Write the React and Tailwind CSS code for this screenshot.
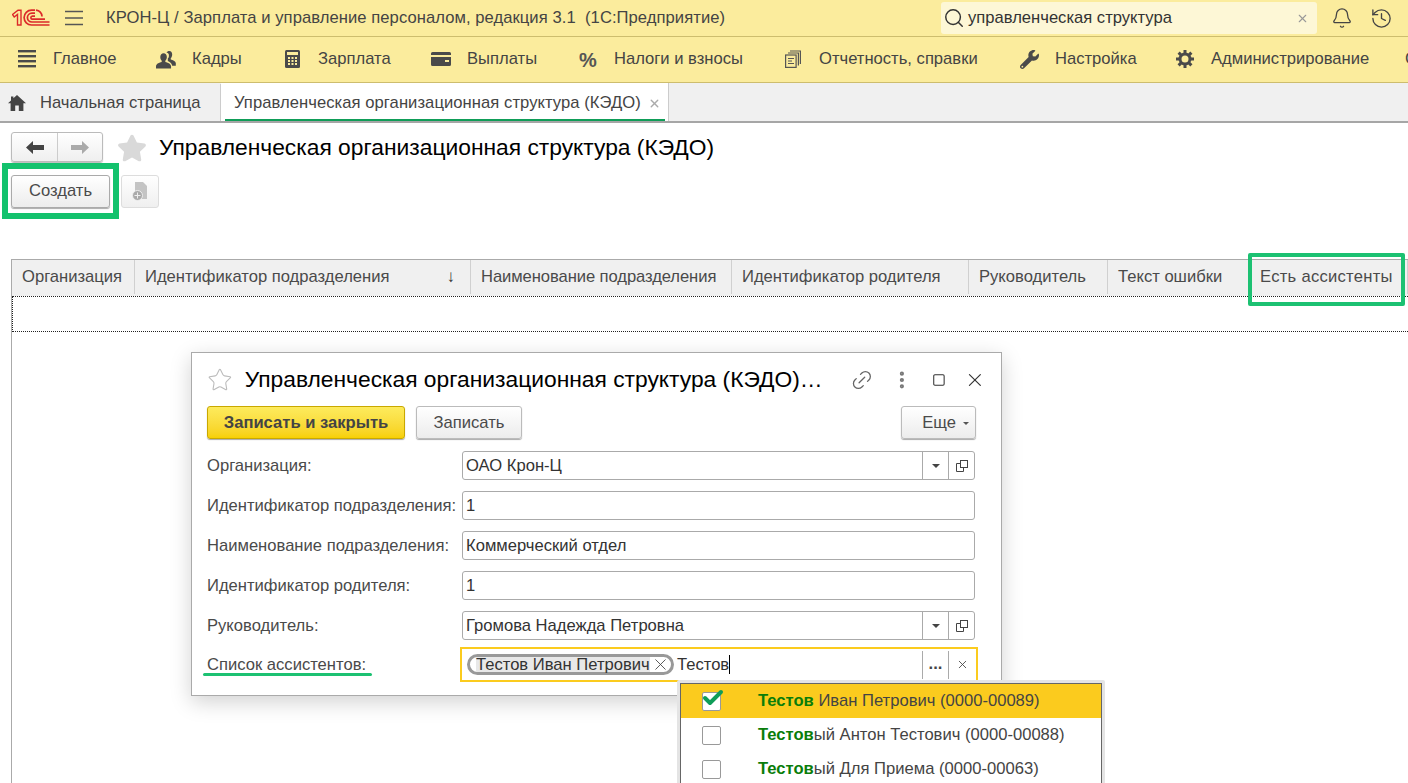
import { Search, X, Bell, History, Link2, Square, EllipsisVertical, Check, Star } from "lucide-react";
import { FaStar, FaWrench } from "react-icons/fa";

const Logo = () => (
  <svg width="38" height="18" viewBox="0 0 38 18" fill="none" stroke="#dc2a2a" strokeWidth="1.4">
    <path d="M0.5 5.5 L6 1.2 H9 V16 H5.5 V5.5 L2.2 8Z" />
    <path d="M23 1.2 H19.5 A7.4 7.4 0 0 0 19.5 16 H37.5" strokeWidth="1.7" />
    <path d="M23 4.2 H19.8 A4.4 4.4 0 0 0 19.8 13 H37.5" strokeWidth="1.7" />
    <path d="M23 7.2 H20 A1.5 1.5 0 0 0 20 10.1 H33" strokeWidth="1.7" />
    <path d="M24 1.2 A7 7 0 0 1 30 7.5" strokeWidth="1.7" />
  </svg>
);

const HamburgerIcon = ({ className }) => (
  <svg width="18" height="16" viewBox="0 0 18 16" className={className} stroke="currentColor" strokeWidth="1.5">
    <path d="M0 1.5H18M0 8H18M0 14.5H18" />
  </svg>
);

const ListIcon = () => (
  <svg width="18" height="18" viewBox="0 0 18 18" fill="#4a4a4a">
    <rect y="0" width="18" height="2.4" />
    <rect y="5" width="18" height="2.4" />
    <rect y="10" width="18" height="2.4" />
    <rect y="15" width="18" height="2.4" />
  </svg>
);

const PeopleIcon = () => (
  <svg width="21" height="19" viewBox="0 0 21 19" fill="#4a4a4a">
    <path d="M14 0.5C16 0.5 17 2 17 4.3C17 6.3 16.2 7.6 15.5 8.2V9.4C17.6 10 20.5 10.8 20.8 13.2V16H17C16.6 13.4 14.4 11.8 12.4 11V8.4C13.6 7.6 13.8 5.6 13.4 4C12.8 2.8 12 2.2 11 2.1C11.6 1.1 12.7 0.5 14 0.5Z" />
    <path d="M8 3C10 3 11.4 4.6 11.4 7C11.4 8.8 10.6 10 9.8 10.8V12C12.2 12.8 15.4 13.6 15.8 16.2V19H0V16.2C0.4 13.6 3.6 12.8 6 12V10.8C5.2 10 4.5 8.8 4.5 7C4.5 4.6 6 3 8 3Z" />
  </svg>
);

const CalcIcon = () => (
  <svg width="15" height="18" viewBox="0 0 15 18">
    <rect width="15" height="18" rx="1.5" fill="#4a4a4a" />
    <rect x="2" y="2" width="11" height="3" fill="#fbec9d" />
    <path d="M3 7H5V9H3ZM6.5 7H8.5V9H6.5ZM10 7H12V9H10ZM3 10H5V12H3ZM6.5 10H8.5V12H6.5ZM10 10H12V12H10ZM3 13H5V15H3ZM6.5 13H8.5V15H6.5ZM10 13H12V15H10Z" fill="#fbec9d" />
  </svg>
);

const CardIcon = () => (
  <svg width="20" height="14" viewBox="0 0 20 14" fill="#4a4a4a">
    <path d="M1.5 0H18.5A1.5 1.5 0 0 1 20 1.5V3H0V1.5A1.5 1.5 0 0 1 1.5 0Z" />
    <path d="M0 5H20V12.5A1.5 1.5 0 0 1 18.5 14H1.5A1.5 1.5 0 0 1 0 12.5ZM14 8V10H18V8Z" fillRule="evenodd" />
  </svg>
);

const ReportsIcon = () => (
  <svg width="16" height="18" viewBox="0 0 16 18" fill="none" stroke="#555" strokeWidth="1.2">
    <path d="M5 1H15.4V14" />
    <path d="M3 3H13.4V15.5" />
    <rect x="0.6" y="5" width="10.5" height="12.4" fill="#fbec9d" />
    <path d="M3 8.5H9M3 11H7M3 13.5H9" />
  </svg>
);

const GearIcon = () => (
  <svg width="18" height="18" viewBox="0 0 18 18" fill="none" stroke="#4a4a4a">
    <circle cx="9" cy="9" r="5" strokeWidth="3" />
    <path d="M9 0V4M9 14V18M0 9H4M14 9H18M2.6 2.6 5.4 5.4M12.6 12.6 15.4 15.4M15.4 2.6 12.6 5.4M5.4 12.6 2.6 15.4" strokeWidth="3" />
  </svg>
);

const HomeIcon = () => (
  <svg width="18" height="16" viewBox="0 0 18 16" fill="#444">
    <path d="M9 0 18 8.2H15.4V16H10.8V10.6H7.2V16H2.6V8.2H0L3 5.4V1.4H5.4V3.2Z" />
  </svg>
);

const navItems = [
  { label: "Главное", icon: <ListIcon />, width: "w-[139px]" },
  { label: "Кадры", icon: <PeopleIcon />, width: "w-[126px]" },
  { label: "Зарплата", icon: <CalcIcon />, width: "w-[149px]" },
  { label: "Выплаты", icon: <CardIcon />, width: "w-[147px]" },
  { label: "Налоги и взносы", icon: <span className="text-[20px] font-bold text-[#555]">%</span>, width: "w-[205px]" },
  { label: "Отчетность, справки", icon: <ReportsIcon />, width: "w-[236px]" },
  { label: "Настройка", icon: <FaWrench size={19} color="#4a4a4a" />, width: "w-[156px]" },
  { label: "Администрирование", icon: <GearIcon />, width: "w-[194px]" },
];

const columns = [
  { label: "Организация", width: "w-[123px]" },
  { label: "Идентификатор подразделения", width: "w-[336px]", sorted: true },
  { label: "Наименование подразделения", width: "w-[261px] tracking-[-0.08px]" },
  { label: "Идентификатор родителя", width: "w-[237px]" },
  { label: "Руководитель", width: "w-[139px]" },
  { label: "Текст ошибки", width: "w-[142px]" },
  { label: "Есть ассистенты", width: "w-[158px] tracking-[0.27px]" },
];

const Field = ({ label, value, buttons }) => (
  <div className="flex h-[29px] items-center mb-[11px]">
    <div className="w-[255px] shrink-0 whitespace-nowrap pt-[2px] text-[#4a4a4a]">{label}</div>
    <div className="flex h-full w-[513px] items-center rounded-[3px] border border-[#aaa] pl-[3px] text-[#333]">
      <div className="flex-1 pt-[2px]">{value}</div>
      {buttons && (
        <>
          <div className="flex h-full w-[26px] items-center justify-center border-l border-[#aaa]">
            <div className="border-x-[4px] border-t-[4px] border-x-transparent border-t-[#444]" />
          </div>
          <div className="flex h-full w-[26px] items-center justify-center border-l border-[#aaa]">
            <svg width="12" height="12" viewBox="0 0 12 12" fill="none" stroke="#444">
              <rect x="4.5" y="0.5" width="7" height="7" />
              <path d="M4.5 3.5H0.5V11.5H7.5V7.5" />
            </svg>
          </div>
        </>
      )}
    </div>
  </div>
);

const PickRow = ({ bold, rest, checked }) => (
  <div className={`flex h-[34px] items-center pl-[21px] ${checked ? "bg-[#fbcb1e]" : "bg-white"}`}>
    <div className="relative mr-[37px] h-[19px] w-[19px] rounded-[2px] border border-[#999] bg-white">
      {checked && <Check size={24} strokeWidth={4} className="absolute -top-[7px] -left-[2px] text-[#0f9d58]" />}
    </div>
    <div className="whitespace-nowrap text-[#444]">
      <span className="font-bold text-[#0a7d0a]">{bold}</span>
      {rest}
    </div>
  </div>
);

export default function App() {
  return (
    <div className="relative h-[783px] w-[1408px] overflow-hidden bg-white text-[16.6px] font-['Liberation_Sans',Arial,sans-serif]">
      {/* title bar */}
      <div className="flex h-[37px] items-center border-b border-[#cdbd6e] bg-[#fbec9d] text-[#444]">
        <div className="ml-[12px] w-[53px]">
          <Logo />
        </div>
        <HamburgerIcon className="text-[#555]" />
        <div className="ml-[23px] w-[835px] whitespace-nowrap tracking-[0.06px]">КРОН-Ц / Зарплата и управление персоналом, редакция 3.1&nbsp; (1С:Предприятие)</div>
        <div className="flex h-[32px] w-[376px] items-center rounded-[3px] bg-[#fdf7d6] pl-[2px] pr-[8px]">
          <Search size={22} strokeWidth={1.6} className="mr-[3px] text-[#333]" />
          <span className="flex-1 text-[#333]">управленческая структура</span>
          <X size={13} className="text-[#999]" />
        </div>
        <Bell size={22} strokeWidth={1.4} className="ml-[14px] text-[#444]" />
        <History size={23} strokeWidth={1.4} className="ml-[17px] text-[#444]" />
      </div>

      {/* sections */}
      <div className="flex h-[46px] items-center overflow-hidden border-b border-[#cdbd6e] bg-[#fbec9d] pl-[17px] text-[#444]">
        {navItems.map((item) => (
          <div key={item.label} className={`flex shrink-0 items-center whitespace-nowrap ${item.width}`}>
            <div className="mr-[16px] flex w-[20px] shrink-0 justify-center">{item.icon}</div>
            <span>{item.label}</span>
          </div>
        ))}
        <span className="ml-[36px] shrink-0">С</span>
      </div>

      {/* tabs */}
      <div className="flex h-[40px] border-b-2 border-[#a6a6a6] bg-[#f0f0f0] pt-[1px]">
        <div className="flex w-[221px] items-center border-r border-[#ccc] pl-[8px] pt-[1px] text-[#444]">
          <div className="mr-[14px]"><HomeIcon /></div>
          Начальная страница
        </div>
        <div className="relative -mt-[1px] flex w-[448px] items-center whitespace-nowrap border-r border-[#ccc] bg-white pt-[2px] pl-[13px] tracking-[0.06px] text-[#444]">
          Управленческая организационная структура (КЭДО)
          <X size={13} strokeWidth={2.5} className="ml-[7px] text-[#aaa]" />
          <div className="absolute bottom-0 left-[4px] right-[3px] h-[2px] bg-[#0f9d58]" />
        </div>
      </div>

      {/* form header */}
      <div className="flex h-[52px] items-start pl-[11px] pt-[9px]">
        <div className="flex h-[30px] w-[92px] rounded-[3px] border border-[#bbb] bg-gradient-to-b from-white to-[#efefef] shadow-[0_1px_1px_#bbb]">
          <div className="flex w-[46px] items-center justify-center border-r border-[#ccc]">
            <svg width="18" height="13" viewBox="0 0 18 13" fill="#444"><path d="M0 6.5 7 0V4H18V9H7V13Z" /></svg>
          </div>
          <div className="flex flex-1 items-center justify-center">
            <svg width="18" height="13" viewBox="0 0 18 13" fill="#aaa"><path d="M18 6.5 11 0V4H0V9H11V13Z" /></svg>
          </div>
        </div>
        <FaStar size={30} color="#d9d9d9" className="ml-[14px] mt-[1px]" />
        <h1 className="ml-[12px] text-[22.8px] leading-[30px] text-black">Управленческая организационная структура (КЭДО)</h1>
      </div>

      {/* command bar */}
      <div className="flex h-[84px] items-start pl-[11px]">
        <button className="h-[33px] w-[99px] rounded-[3px] border border-[#aaa] bg-gradient-to-b from-white to-[#ececec] text-[#4a4a4a] shadow-[0_1px_1px_#aaa]">
          Создать
        </button>
        <div className="ml-[11px] flex h-[33px] w-[38px] items-center justify-center rounded-[3px] border border-[#ddd] bg-gradient-to-b from-white to-[#efefef]">
          <svg width="16" height="19" viewBox="0 0 16 19">
            <path d="M3 0H11L15 4V17H3Z" fill="#c4c4c4" />
            <circle cx="5.5" cy="13.5" r="5" fill="#aaa" stroke="#eee" />
            <path d="M2.5 13.5H8.5M5.5 10.5V16.5" stroke="#eee" />
          </svg>
        </div>
      </div>

      {/* list */}
      <div className="ml-[11px] h-[525px] border-l border-[#aaa]">
        <div className="flex h-[37px] border-t border-[#aaa] bg-[#f0f0f0] pb-[2px] text-[#4a4a4a]">
          {columns.map((col) => (
            <div key={col.label} className={`flex shrink-0 items-center justify-between border-r border-[#d0d0d0] pl-[10px] pr-[15px] ${col.width}`}>
              <span className="whitespace-nowrap">{col.label}</span>
              {col.sorted && <span className="text-[17px] text-[#333]">↓</span>}
            </div>
          ))}
        </div>
        <div className="h-[36px] border-y border-l border-dotted border-[#222]" />
      </div>

      {/* annotations */}
      <div className="absolute left-[2px] top-[163px] h-[56px] w-[117px] border-[6px] border-[#13c26d]" />
      <div className="absolute left-[1248px] top-[253px] h-[53px] w-[157px] rounded-[2px] border-[4px] border-[#1cc172]" />

      {/* window */}
      <div className="absolute left-[191px] top-[352px] h-[344px] w-[811px] border border-[#aaa] bg-white px-[15px] shadow-[0_6px_20px_rgba(0,0,0,0.18)]">
        <div className="flex h-[53px] items-center">
          <Star size={26} strokeWidth={1} className="text-[#bbb]" />
          <div className="ml-[12px] w-[605px] flex-none whitespace-nowrap text-[22.8px] leading-none text-black">
            Управленческая организационная структура (КЭДО)…
          </div>
          <Link2 size={24} strokeWidth={1.3} className="-rotate-45 text-[#666]" />
          <EllipsisVertical size={22} strokeWidth={2.6} className="ml-[17px] text-[#777]" />
          <Square size={14} strokeWidth={1.8} className="ml-[20px] text-[#333]" />
          <X size={22} strokeWidth={1.3} className="ml-[18px] text-[#333]" />
        </div>
        <div className="flex h-[45px] items-start">
          <button className="h-[33px] w-[198px] rounded-[3px] border border-[#c9a800] bg-gradient-to-b from-[#fdeb5c] to-[#f7d000] pt-[2px] font-bold text-[#444] shadow-[0_1px_1px_#aaa]">
            Записать и закрыть
          </button>
          <button className="ml-[11px] h-[33px] w-[106px] rounded-[3px] border border-[#bbb] bg-gradient-to-b from-white to-[#ececec] pt-[2px] text-[#4a4a4a] shadow-[0_1px_1px_#aaa]">
            Записать
          </button>
          <button className="ml-auto mr-[10px] flex h-[33px] w-[75px] items-center justify-end gap-[7px] rounded-[3px] border border-[#bbb] bg-gradient-to-b from-white to-[#ececec] pr-[6px] pt-[2px] text-[#4a4a4a] shadow-[0_1px_1px_#aaa]">
            Еще
            <span className="border-x-[3px] border-t-[3px] border-x-transparent border-t-[#555]" />
          </button>
        </div>
        <Field label="Организация:" value="ОАО Крон-Ц" buttons />
        <Field label="Идентификатор подразделения:" value="1" />
        <Field label="Наименование подразделения:" value="Коммерческий отдел" />
        <Field label="Идентификатор родителя:" value="1" />
        <Field label="Руководитель:" value="Громова Надежда Петровна" buttons />
        <div className="-mt-[4px] flex h-[35px] items-center">
          <div className="relative w-[253px] shrink-0 pt-[2px] text-[#4a4a4a]">
            Список ассистентов:
            <div className="absolute left-[-4px] top-[22px] h-[3px] w-[169px] rounded-full bg-[#1cc172]" />
          </div>
          <div className="flex h-full w-[518px] items-center border-2 border-[#fbcb1e] pl-[5px] text-[#333]">
            <div className="flex h-[21px] w-[207px] shrink-0 items-center rounded-full border-[3px] border-[#999] pl-[6px] whitespace-nowrap">
              <span className="bg-[#e8e8e8] leading-[15px]">Тестов Иван Петрович</span>
              <X size={19} strokeWidth={1.1} className="ml-[1px] shrink-0 text-[#444]" />
            </div>
            <span className="ml-[3px] pt-[1px]">Тестов</span>
            <span className="h-[19px] w-px bg-black" />
            <div className="ml-auto flex h-[28px] w-[26px] items-center justify-center border-l border-[#aaa] font-bold leading-none text-[#444]">
              ...
            </div>
            <div className="flex h-[28px] w-[28px] items-center justify-center border-l border-[#aaa]">
              <X size={13} strokeWidth={1.6} className="text-[#444]" />
            </div>
          </div>
        </div>
      </div>

      {/* pick list */}
      <div className="absolute left-[677px] top-[680px] h-[110px] w-[428px] rounded-[2px] border-[3px] border-[#e4e4e4]">
        <div className="h-full border border-[#666] text-[#444]">
          <PickRow bold="Тестов" rest=" Иван Петрович (0000-00089)" checked />
          <PickRow bold="Тестов" rest="ый Антон Тестович (0000-00088)" />
          <PickRow bold="Тестов" rest="ый Для Приема (0000-00063)" />
        </div>
      </div>
    </div>
  );
}
